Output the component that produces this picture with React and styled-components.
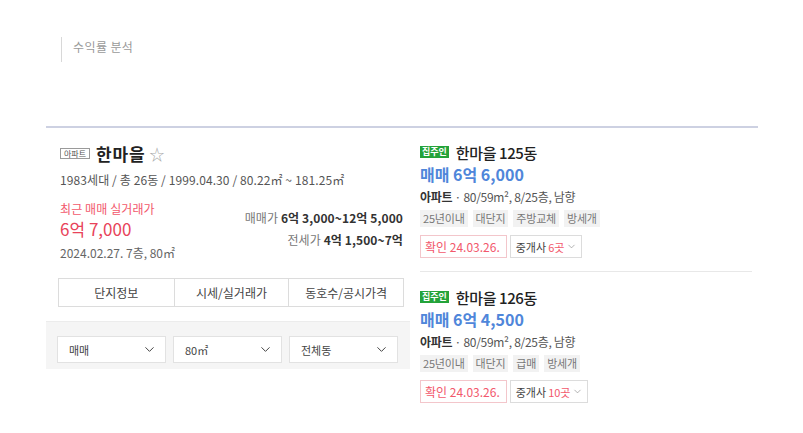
import React from "react";
import styled, { createGlobalStyle } from "styled-components";
import { ChevronDown } from "lucide-react";

const Global = createGlobalStyle`
  html, body { margin: 0; padding: 0; background: #fff; }
  body { font-family: "Noto Sans CJK KR", "Noto Sans", sans-serif; color: #222; }
`;

const Page = styled.div`
  width: 803px;
  height: 433px;
  padding: 37px 45px 0 46px;
  box-sizing: border-box;
`;

const SectionTitle = styled.div`
  margin-left: 15px;
  height: 25px;
  border-left: 1px solid #d8d8d8;
  padding-left: 11px;
  font-size: 12px;
  line-height: 20px;
  color: #9a9a9a;
  letter-spacing: 0.4px;
`;

const Board = styled.div`
  margin-top: 64px;
  border-top: 2px solid #cdd1e2;
  display: flex;
  align-items: flex-start;
`;

const Left = styled.div`
  width: 364px;
  display: flex;
  flex-direction: column;
`;

const LeftInner = styled.div`
  padding: 15px 6px 0 12px;
`;

const TitleRow = styled.div`
  display: flex;
  align-items: center;
  height: 20px;
  padding-left: 2px;
`;

const TypeTag = styled.span`
  border: 1px solid #9a9a9a;
  font-size: 8px;
  line-height: 9px;
  padding: 0 3px;
  color: #555;
  margin-right: 6px;
`;

const AptName = styled.span`
  font-size: 17px;
  font-weight: 700;
  color: #222;
  letter-spacing: 0.8px;
`;

const Star = styled.span`
  font-size: 15px;
  color: #a8a8a8;
  margin-left: 4px;
  line-height: 1;
`;

const InfoLine = styled.div`
  margin-top: 8px;
  padding-left: 2px;
  font-size: 12px;
  line-height: 17px;
  color: #555;
  letter-spacing: 0.1px;
`;

const PriceRow = styled.div`
  margin-top: 12px;
  padding-left: 2px;
  display: flex;
  justify-content: space-between;
  align-items: flex-start;
`;

const Recent = styled.div`
  display: flex;
  flex-direction: column;
`;

const RecentLabel = styled.div`
  font-size: 12px;
  line-height: 17px;
  color: #f2586c;
  letter-spacing: 0.1px;
`;

const RecentPrice = styled.div`
  font-size: 17px;
  color: #e8435a;
  line-height: 24px;
`;

const RecentMeta = styled.div`
  margin-top: 3px;
  font-size: 12px;
  line-height: 17px;
  color: #666;
`;

const Ranges = styled.div`
  display: flex;
  flex-direction: column;
  align-items: flex-end;
  margin: 9px 1px 0 0;
  gap: 5px;
`;

const Range = styled.div`
  font-size: 12px;
  line-height: 17px;
  color: #777;
  letter-spacing: 0.1px;
  b { color: #333; font-weight: 700; }
`;

const Tabs = styled.div`
  margin-top: 17px;
  display: grid;
  grid-template-columns: repeat(3, 1fr);
  border: 1px solid #dcdcdc;
  box-sizing: border-box;
  height: 29px;
`;

const Tab = styled.div`
  display: flex;
  align-items: center;
  justify-content: center;
  font-size: 12px;
  color: #444;
  border-left: ${(p) => (p.$first ? "none" : "1px solid #dcdcdc")};
`;

const FilterBar = styled.div`
  margin-top: 14px;
  background: #f5f5f5;
  border-top: 1px solid #ececec;
  padding: 14px 12px 6px 11px;
  display: flex;
  gap: 7px;
`;

const Select = styled.div`
  flex: 1;
  height: 27px;
  background: #fff;
  border: 1px solid #e2e2e2;
  box-sizing: border-box;
  display: flex;
  align-items: center;
  justify-content: space-between;
  padding: 0 8px 0 11px;
  font-size: 11px;
  color: #444;
`;

const Right = styled.div`
  margin-left: 10px;
  width: 332px;
  padding-top: 15px;
`;

const Item = styled.div`
  padding: ${(p) => (p.$first ? "0 0 13px" : "16px 0 0")};
  border-bottom: ${(p) => (p.$first ? "1px solid #e8e8e8" : "none")};
`;

const ItemHead = styled.div`
  display: flex;
  align-items: center;
  height: 18px;
`;

const OwnerBadge = styled.span`
  background: #24a33a;
  color: #fff;
  font-size: 9px;
  line-height: 12px;
  padding: 0 2px;
  margin-right: 7px;
  font-weight: 700;
`;

const ItemTitle = styled.span`
  font-size: 15px;
  font-weight: 500;
  color: #222;
  letter-spacing: -0.4px;
`;

const ItemPrice = styled.div`
  margin-top: 3px;
  font-size: 16px;
  font-weight: 700;
  color: #4f86da;
  line-height: 20px;
`;

const ItemInfo = styled.div`
  margin-top: 4px;
  font-size: 12px;
  line-height: 17px;
  color: #555;
  letter-spacing: -0.3px;
  b { color: #333; font-weight: 700; }
`;

const TagRow = styled.div`
  margin-top: 5px;
  display: flex;
  gap: 5px;
`;

const Tag = styled.span`
  background: #f2f2f2;
  color: #777;
  font-size: 11px;
  line-height: 17px;
  padding: 0 3px;
  letter-spacing: -0.2px;
`;

const ActionRow = styled.div`
  margin-top: 8px;
  display: flex;
  gap: 3px;
`;

const Confirm = styled.span`
  border: 1px solid #f3c6cb;
  color: #f2586c;
  font-size: 12px;
  height: 23px;
  box-sizing: border-box;
  display: flex;
  align-items: center;
  padding: 0 6px 0 4px;
`;

const Agents = styled.span`
  border: 1px solid #dcdcdc;
  color: #444;
  font-size: 11px;
  height: 23px;
  box-sizing: border-box;
  display: flex;
  align-items: center;
  gap: 2px;
  padding: 0 4px 0 5px;
  em { font-style: normal; color: #f2586c; }
`;

const listings = [
  { dong: "한마을 125동", price: "매매 6억 6,000", tags: ["25년이내", "대단지", "주방교체", "방세개"], agents: "6곳" },
  { dong: "한마을 126동", price: "매매 6억 4,500", tags: ["25년이내", "대단지", "급매", "방세개"], agents: "10곳" },
];

export default function App() {
  return (
    <Page>
      <Global />
      <SectionTitle>수익률 분석</SectionTitle>
      <Board>
        <Left>
          <LeftInner>
            <TitleRow>
              <TypeTag>아파트</TypeTag>
              <AptName>한마을</AptName>
              <Star>☆</Star>
            </TitleRow>
            <InfoLine>1983세대 / 총 26동 / 1999.04.30 / 80.22㎡ ~ 181.25㎡</InfoLine>
            <PriceRow>
              <Recent>
                <RecentLabel>최근 매매 실거래가</RecentLabel>
                <RecentPrice>6억 7,000</RecentPrice>
                <RecentMeta>2024.02.27. 7층, 80㎡</RecentMeta>
              </Recent>
              <Ranges>
                <Range>매매가 <b>6억 3,000~12억 5,000</b></Range>
                <Range>전세가 <b>4억 1,500~7억</b></Range>
              </Ranges>
            </PriceRow>
            <Tabs>
              <Tab $first>단지정보</Tab>
              <Tab>시세/실거래가</Tab>
              <Tab>동호수/공시가격</Tab>
            </Tabs>
          </LeftInner>
          <FilterBar>
            <Select>매매<ChevronDown size={15} strokeWidth={1.6} color="#444" /></Select>
            <Select>80㎡<ChevronDown size={15} strokeWidth={1.6} color="#444" /></Select>
            <Select>전체동<ChevronDown size={15} strokeWidth={1.6} color="#444" /></Select>
          </FilterBar>
        </Left>
        <Right>
          {listings.map((l, i) => (
            <Item key={l.dong} $first={i === 0}>
              <ItemHead>
                <OwnerBadge>집주인</OwnerBadge>
                <ItemTitle>{l.dong}</ItemTitle>
              </ItemHead>
              <ItemPrice>{l.price}</ItemPrice>
              <ItemInfo><b>아파트</b> · 80/59m², 8/25층, 남향</ItemInfo>
              <TagRow>
                {l.tags.map((t) => <Tag key={t}>{t}</Tag>)}
              </TagRow>
              <ActionRow>
                <Confirm>확인 24.03.26.</Confirm>
                <Agents>중개사 <em>{l.agents}</em><ChevronDown size={11} strokeWidth={1.4} color="#888" /></Agents>
              </ActionRow>
            </Item>
          ))}
        </Right>
      </Board>
    </Page>
  );
}
